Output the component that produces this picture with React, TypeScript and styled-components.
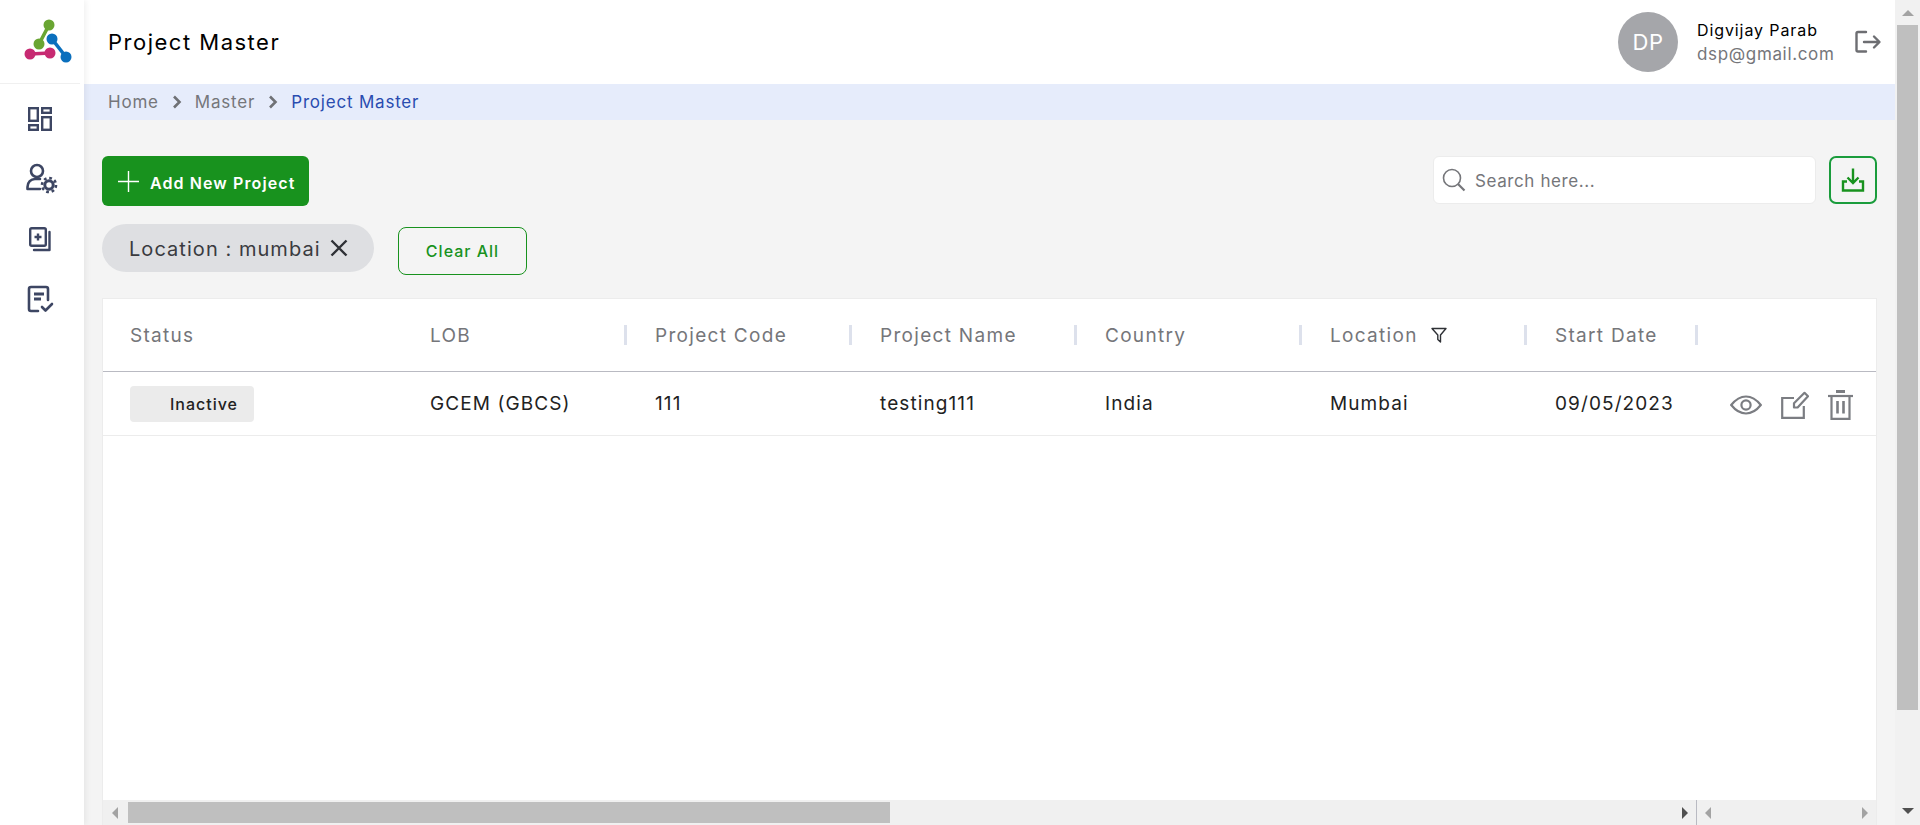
import React from 'react';
import styled, { createGlobalStyle } from 'styled-components';

const GlobalStyle = createGlobalStyle`
  html, body {
    margin: 0;
    padding: 0;
    height: 100%;
    overflow: hidden;
    background: #f4f4f4;
    font-family: 'Inter', 'Liberation Sans', sans-serif;
  }
  * {
    box-sizing: border-box;
  }
`;

type TColumn = {
  title: string;
  value: string;
  filter?: boolean;
  noDivider?: boolean;
};

const columns: TColumn[] = [
  { title: 'LOB', value: 'GCEM (GBCS)', noDivider: true },
  { title: 'Project Code', value: '111' },
  { title: 'Project Name', value: 'testing111' },
  { title: 'Country', value: 'India' },
  { title: 'Location', value: 'Mumbai', filter: true },
  { title: 'Start Date', value: '09/05/2023' },
];

const Logo = () => (
  <svg width="84" height="84" viewBox="0 0 84 84">
    <g fill="none" strokeLinecap="round">
      <path d="M49 25 L39 44" stroke="#69a532" strokeWidth="3.6" />
      <path d="M30 54 L50 53" stroke="#c72a72" strokeWidth="3.6" />
      <path d="M52 39 L66 57" stroke="#0a6fbd" strokeWidth="3.6" />
    </g>
    <circle cx="49" cy="25" r="5.5" fill="#69a532" />
    <circle cx="39" cy="44" r="5.5" fill="#69a532" />
    <circle cx="30" cy="54" r="5.5" fill="#c72a72" />
    <circle cx="50" cy="53" r="5.5" fill="#c72a72" />
    <circle cx="52" cy="39" r="5.5" fill="#0a6fbd" />
    <circle cx="66" cy="57" r="5.5" fill="#0a6fbd" />
  </svg>
);

const DashboardIcon = () => (
  <svg width="26" height="26" viewBox="0 0 26 26" fill="none" stroke="#3d4663" strokeWidth="2.4">
    <rect x="2.2" y="2.2" width="8.6" height="12.6" />
    <rect x="15.2" y="2.2" width="8.6" height="4.6" />
    <rect x="2.2" y="19.2" width="8.6" height="4.6" />
    <rect x="15.2" y="11.2" width="8.6" height="12.6" />
  </svg>
);

const UserGearIcon = () => (
  <svg width="38" height="32" viewBox="-5 0 38 32" fill="none" stroke="#3d4663" strokeWidth="2.6">
    <circle cx="11" cy="8" r="6" />
    <path d="M1.5 26 v-2 c0 -5 3.5 -8 7.5 -8 h5 M1.5 26 h12.5" strokeLinecap="round" />
    <circle cx="23" cy="22" r="4.2" strokeWidth="3" />
    <circle cx="23" cy="22" r="7" strokeWidth="2.6" strokeDasharray="2.75 2.75" />
  </svg>
);

const AddDocIcon = () => (
  <svg width="24" height="26" viewBox="0 0 24 26" fill="none" stroke="#3d4663" strokeWidth="2.4">
    <rect x="2.2" y="2.2" width="15.6" height="17.6" rx="1.5" />
    <path d="M21.5 6 V24 H6" strokeLinecap="round" strokeLinejoin="round" />
    <path d="M10 7.5 v7 M6.5 11 h7" />
  </svg>
);

const ReportIcon = () => (
  <svg width="28" height="28" viewBox="0 0 28 28" fill="none" stroke="#3d4663" strokeWidth="2.6">
    <path d="M12 26 H5 a2 2 0 0 1 -2 -2 V4 a2 2 0 0 1 2 -2 H20 a2 2 0 0 1 2 2 V15" strokeLinecap="round" />
    <path d="M8 9 H18 M8 14 H15" strokeWidth="2.8" />
    <path d="M16 22 l3.5 3.5 L26 19" strokeLinecap="round" strokeLinejoin="round" />
  </svg>
);

const LogoutIcon = () => (
  <svg width="27" height="24" viewBox="0 0 27 24" fill="none" stroke="#6d6e72" strokeWidth="2.4" strokeLinecap="round" strokeLinejoin="round">
    <path d="M11 2 H3 a1.5 1.5 0 0 0 -1.5 1.5 V20 a1.5 1.5 0 0 0 1.5 1.5 H11" />
    <path d="M9 12 H24 M19 6.5 L24.5 12 L19 17.5" />
  </svg>
);

const Chevron = () => (
  <svg width="10" height="14" viewBox="0 0 10 14" fill="none" stroke="#6f7175" strokeWidth="2.6">
    <path d="M2 1.5 L7.5 7 L2 12.5" />
  </svg>
);

const PlusIcon = () => (
  <svg width="21" height="21" viewBox="0 0 21 21" stroke="#fff" strokeWidth="1.4">
    <path d="M10.5 0 V21 M0 10.5 H21" />
  </svg>
);

const CloseIcon = () => (
  <svg width="18" height="18" viewBox="0 0 18 18" stroke="#2f3136" strokeWidth="2.4">
    <path d="M1.5 1.5 L16.5 16.5 M16.5 1.5 L1.5 16.5" />
  </svg>
);

const SearchIcon = () => (
  <svg width="24" height="24" viewBox="0 0 24 24" fill="none" stroke="#75767a" strokeWidth="1.6">
    <circle cx="10" cy="10" r="8.5" />
    <path d="M16 16 L22.5 22.5" strokeWidth="2.2" />
  </svg>
);

const DownloadIcon = () => (
  <svg width="24" height="24" viewBox="0 0 24 24" fill="none" stroke="#18921e" strokeWidth="2.4">
    <path d="M12 0.5 V15 M6.5 9.5 L12 15 L17.5 9.5" />
    <path d="M6 13.5 H2 V22.5 H22 V13.5 H18" />
  </svg>
);

const FilterIcon = () => (
  <svg width="16" height="16" viewBox="0 0 16 16" fill="none" stroke="#2f3136" strokeWidth="1.4" strokeLinejoin="round">
    <path d="M1 1.5 H15 L9.5 8 V15 L6.8 12.5 V8 Z" />
  </svg>
);

const EyeIcon = () => (
  <svg width="32" height="20" viewBox="0 0 32 20" fill="none" stroke="#7b7d82" strokeWidth="2.2">
    <path d="M1.2 10 C6 4 11 1.5 16 1.5 C21 1.5 26 4 30.8 10 C26 16 21 18.5 16 18.5 C11 18.5 6 16 1.2 10 Z" />
    <circle cx="16" cy="10" r="4.6" />
  </svg>
);

const EditIcon = () => (
  <svg width="28" height="28" viewBox="0 0 28 28" fill="none" stroke="#7b7d82" strokeWidth="2.2">
    <path d="M13 7 H1.2 V26.8 H22.8 V15" />
    <path d="M13 16.5 V12.2 L23.5 1.8 L27 5.2 L16.6 16.5 Z" strokeLinejoin="round" />
  </svg>
);

const TrashIcon = () => (
  <svg width="25" height="30" viewBox="0 0 25 30" fill="none" stroke="#7b7d82" strokeWidth="2.2">
    <path d="M0 6 H25" />
    <path d="M8 1.5 H17" strokeWidth="3" />
    <path d="M3.5 6 V28.8 H21.5 V6" />
    <path d="M9.5 11 V23.5 M15.5 11 V23.5" strokeWidth="2.6" />
  </svg>
);

const Arrow = ({ dir, dark }: { dir: 'left' | 'right' | 'up' | 'down'; dark?: boolean }) => {
  const points = {
    left: '6,0 6,12 0,6',
    right: '0,0 0,12 6,6',
    up: '0,6 12,6 6,0',
    down: '0,0 12,0 6,6',
  }[dir];
  const horizontal = dir === 'left' || dir === 'right';
  return (
    <svg width={horizontal ? 6 : 12} height={horizontal ? 12 : 6}>
      <polygon points={points} fill={dark ? '#505050' : '#a3a3a3'} />
    </svg>
  );
};

export default function App() {
  return (
    <Page>
      <GlobalStyle />
      <Sidebar>
        <LogoBox>
          <Logo />
        </LogoBox>
        <NavList>
          <NavItem><DashboardIcon /></NavItem>
          <NavItem><UserGearIcon /></NavItem>
          <NavItem><AddDocIcon /></NavItem>
          <NavItem><ReportIcon /></NavItem>
        </NavList>
      </Sidebar>
      <Main>
        <Header>
          <PageTitle>Project Master</PageTitle>
          <UserBox>
            <Avatar>DP</Avatar>
            <UserText>
              <UserName>Digvijay Parab</UserName>
              <UserMail>dsp@gmail.com</UserMail>
            </UserText>
            <LogoutButton><LogoutIcon /></LogoutButton>
          </UserBox>
        </Header>
        <Breadcrumb>
          <Crumb>Home</Crumb>
          <Chevron />
          <Crumb>Master</Crumb>
          <Chevron />
          <Crumb $active>Project Master</Crumb>
        </Breadcrumb>
        <Content>
          <ToolRow>
            <AddButton>
              <PlusIcon />
              <AddLabel>Add New Project</AddLabel>
            </AddButton>
            <ToolRight>
              <SearchBox>
                <SearchIcon />
                <SearchInput placeholder="Search here..." />
              </SearchBox>
              <DownloadButton><DownloadIcon /></DownloadButton>
            </ToolRight>
          </ToolRow>
          <FilterRow>
            <Chip>
              <ChipLabel>Location : mumbai</ChipLabel>
              <CloseIcon />
            </Chip>
            <ClearButton>Clear All</ClearButton>
          </FilterRow>
          <TableCard>
            <TableBody>
              <HeadRow>
                <HeadCell $first>Status</HeadCell>
                {columns.map((c) => (
                  <HeadCell key={c.title} $divider={!c.noDivider}>
                    {c.title}
                    {c.filter && <FilterIcon />}
                  </HeadCell>
                ))}
                <HeadCell $divider />
              </HeadRow>
              <DataRow>
                <DataCell $first>
                  <StatusBadge>Inactive</StatusBadge>
                </DataCell>
                {columns.map((c) => (
                  <DataCell key={c.title}>{c.value}</DataCell>
                ))}
                <ActionCell>
                  <EyeIcon />
                  <EditIcon />
                  <TrashIcon />
                </ActionCell>
              </DataRow>
            </TableBody>
            <HScrollBar>
              <HScrollMain>
                <Arrow dir="left" />
                <HThumb />
                <Arrow dir="right" dark />
              </HScrollMain>
              <HScrollSide>
                <Arrow dir="left" />
                <Arrow dir="right" />
              </HScrollSide>
            </HScrollBar>
          </TableCard>
        </Content>
      </Main>
      <VScrollBar>
        <Arrow dir="up" />
        <VThumbTrack>
          <VThumb />
        </VThumbTrack>
        <Arrow dir="down" dark />
      </VScrollBar>
    </Page>
  );
}

const Page = styled.div`
  display: grid;
  grid-template-columns: 84px 1fr 25px;
  width: 1920px;
  height: 825px;
  overflow: hidden;
`;

const Sidebar = styled.aside`
  background: #fff;
  box-shadow: 2px 0 6px rgba(0, 0, 0, 0.06);
  z-index: 1;
`;

const LogoBox = styled.div`
  height: 84px;
  width: 80px;
  border-bottom: 1px solid #f0f0f0;
`;

const NavList = styled.nav`
  display: flex;
  flex-direction: column;
  padding-top: 5px;
`;

const NavItem = styled.div`
  display: flex;
  align-items: center;
  justify-content: center;
  height: 60px;
  width: 80px;
`;

const Main = styled.main`
  display: flex;
  flex-direction: column;
  min-width: 0;
`;

const Header = styled.header`
  display: flex;
  align-items: center;
  justify-content: space-between;
  height: 84px;
  padding: 0 13px 0 24px;
  background: #fff;
`;

const PageTitle = styled.h1`
  margin: 0;
  font-size: 22px;
  font-weight: 400;
  color: #000;
  letter-spacing: 1.5px;
`;

const UserBox = styled.div`
  display: flex;
  align-items: center;
`;

const Avatar = styled.div`
  display: flex;
  align-items: center;
  justify-content: center;
  width: 60px;
  height: 60px;
  border-radius: 50%;
  background: #a5a6aa;
  color: #fff;
  font-size: 22px;
  letter-spacing: 0.6px;
`;

const UserText = styled.div`
  display: flex;
  flex-direction: column;
  gap: 4px;
  margin-left: 19px;
  width: 158px;
`;

const UserName = styled.div`
  font-size: 16px;
  color: #000;
  line-height: 20px;
  letter-spacing: 0.9px;
`;

const UserMail = styled.div`
  font-size: 17px;
  color: #75767a;
  line-height: 20px;
  letter-spacing: 0.65px;
`;

const LogoutButton = styled.div`
  display: flex;
`;

const Breadcrumb = styled.div`
  display: flex;
  align-items: center;
  gap: 13px;
  height: 36px;
  padding-left: 24px;
  background: #e6ecfb;
`;

const Crumb = styled.span<{ $active?: boolean }>`
  font-size: 17px;
  letter-spacing: 0.8px;
  color: ${(p) => (p.$active ? '#2a4cb0' : '#75767a')};
`;

const Content = styled.div`
  display: flex;
  flex: 1;
  flex-direction: column;
  min-height: 0;
  padding: 36px 18px 0 18px;
`;

const ToolRow = styled.div`
  display: flex;
  align-items: flex-start;
  justify-content: space-between;
`;

const AddButton = styled.button`
  display: flex;
  align-items: center;
  gap: 11px;
  width: 207px;
  height: 50px;
  padding: 0 0 0 16px;
  border: none;
  border-radius: 6px;
  background: #18921e;
  color: #fff;
  font-family: inherit;
  font-size: 16px;
  font-weight: 600;
  letter-spacing: 1.1px;
`;

const AddLabel = styled.span`
  padding-top: 3px;
`;

const ToolRight = styled.div`
  display: flex;
  gap: 13px;
`;

const SearchBox = styled.div`
  display: flex;
  align-items: center;
  gap: 9px;
  width: 383px;
  height: 48px;
  padding-left: 8px;
  border: 1px solid #ececec;
  border-radius: 6px;
  background: #fff;
`;

const SearchInput = styled.input`
  flex: 1;
  min-width: 0;
  padding: 2px 0 0;
  border: none;
  outline: none;
  background: transparent;
  font-family: inherit;
  font-size: 17px;
  letter-spacing: 0.6px;
  &::placeholder {
    color: #75767a;
    opacity: 1;
  }
`;

const DownloadButton = styled.button`
  display: flex;
  align-items: center;
  justify-content: center;
  width: 48px;
  height: 48px;
  padding: 0;
  border: 2px solid #1a9c3c;
  border-radius: 7px;
  background: transparent;
`;

const FilterRow = styled.div`
  display: flex;
  align-items: flex-start;
  gap: 24px;
  margin-top: 18px;
`;

const Chip = styled.div`
  display: flex;
  align-items: center;
  gap: 9px;
  width: 272px;
  height: 48px;
  padding-left: 27px;
  border-radius: 24px;
  background: #dedfe2;
  color: #3a3b3f;
  font-size: 20px;
  letter-spacing: 1.05px;
`;

const ChipLabel = styled.span`
  padding-top: 2px;
`;

const ClearButton = styled.button`
  width: 129px;
  height: 48px;
  margin-top: 3px;
  border: 1px solid #18921e;
  border-radius: 8px;
  background: transparent;
  color: #18921e;
  font-family: inherit;
  font-size: 16px;
  font-weight: 500;
  letter-spacing: 1px;
`;

const TableCard = styled.div`
  display: flex;
  flex: 1;
  flex-direction: column;
  min-height: 0;
  margin-top: 23px;
  border: 1px solid #ececec;
  border-bottom: none;
  background: #fff;
`;

const TableBody = styled.div`
  flex: 1;
  min-height: 0;
`;

const rowColumns = '299px 225px 225px 225px 225px 225px 171px 1fr';

const HeadRow = styled.div`
  display: grid;
  grid-template-columns: ${rowColumns};
  align-items: center;
  height: 73px;
  border-bottom: 1px solid #b9bac2;
`;

const HeadCell = styled.div<{ $divider?: boolean; $first?: boolean }>`
  display: flex;
  align-items: center;
  gap: 13px;
  height: 20px;
  padding-left: ${(p) => (p.$first ? '27px' : '28px')};
  border-left: ${(p) => (p.$divider ? '3px solid #dde1ec' : 'none')};
  margin-left: ${(p) => (p.$divider ? '-3px' : '0')};
  color: #75767a;
  font-size: 19px;
  letter-spacing: 1.3px;
`;

const DataRow = styled.div`
  display: grid;
  grid-template-columns: ${rowColumns};
  align-items: center;
  height: 64px;
  border-bottom: 1px solid #ececec;
`;

const DataCell = styled.div<{ $first?: boolean }>`
  padding-left: ${(p) => (p.$first ? '27px' : '28px')};
  color: #222;
  font-size: 19px;
  letter-spacing: 1.1px;
`;

const ActionCell = styled.div`
  display: flex;
  align-items: center;
  gap: 19px;
  padding: 2px 0 0 32px;
`;

const StatusBadge = styled.span`
  display: flex;
  align-items: center;
  justify-content: flex-end;
  width: 124px;
  height: 36px;
  padding-right: 16px;
  border-radius: 4px;
  background: #ebebeb;
  color: #222;
  font-size: 16px;
  font-weight: 500;
  letter-spacing: 1px;
`;

const HScrollBar = styled.div`
  display: grid;
  grid-template-columns: 1594px 1fr;
  height: 25px;
  background: #f0f0f0;
`;

const HScrollMain = styled.div`
  display: flex;
  align-items: center;
  padding: 0 8px 0 9px;
  border-right: 1px solid #b9bac2;
`;

const HThumb = styled.div`
  width: 762px;
  height: 21px;
  margin: 0 auto 0 10px;
  background: #bfbfbf;
`;

const HScrollSide = styled.div`
  display: flex;
  align-items: center;
  justify-content: space-between;
  padding: 0 8px;
`;

const VScrollBar = styled.div`
  display: flex;
  flex-direction: column;
  align-items: center;
  justify-content: space-between;
  padding: 10px 0 11px;
  background: #f1f1f1;
`;

const VThumbTrack = styled.div`
  flex: 1;
  width: 100%;
  padding: 9px 2px 0;
`;

const VThumb = styled.div`
  height: 685px;
  background: #bfbfbf;
`;
